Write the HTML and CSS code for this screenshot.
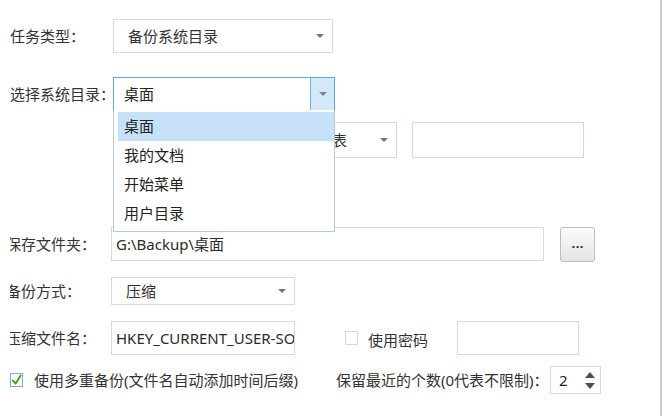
FILE: index.html
```html
<!DOCTYPE html>
<html lang="zh-CN">
<head>
    <meta charset="UTF-8">
    <title>备份任务</title>
    <link rel="stylesheet" href="styles.css">
</head>
<body>
    <div class="panel">
        <div class="row row-task">
            <span class="label">任务类型：</span>
            <div class="select w-220">
                <span class="select-text">备份系统目录</span>
                <span class="arrow"></span>
            </div>
        </div>

        <div class="row row-dir">
            <span class="label">选择系统目录：</span>
            <div class="select select-open w-221">
                <span class="select-text">桌面</span>
                <span class="select-btn"><span class="arrow"></span></span>
            </div>
        </div>

        <div class="row row-hidden">
            <div class="select select-reg w-187">
                <span class="select-text">注册表</span>
                <span class="arrow"></span>
            </div>
            <div class="input w-172"></div>
        </div>

        <div class="lower">
            <div class="row row-save">
                <span class="label cut">保存文件夹：</span>
                <div class="input w-433"><span class="input-text">G:\Backup\桌面</span></div>
                <button class="browse">...</button>
            </div>

            <div class="row row-mode">
                <span class="label cut">备份方式：</span>
                <div class="select w-184 h-28">
                    <span class="select-text">压缩</span>
                    <span class="arrow"></span>
                </div>
            </div>

            <div class="row row-zip">
                <span class="label cut">压缩文件名：</span>
                <div class="input w-184"><span class="input-text">HKEY_CURRENT_USER-SOFTWARE</span></div>
                <span class="check check-pwd"></span>
                <span class="check-label">使用密码</span>
                <div class="input w-122 pwd"></div>
            </div>

            <div class="row row-multi">
                <span class="check checked">
                    <svg viewBox="0 0 12 14" width="12" height="14">
                        <path d="M2 7.5 L5 11 L10.5 2" fill="none" stroke="#3f9a1c" stroke-width="2" stroke-linecap="round" stroke-linejoin="round"/>
                    </svg>
                </span>
                <span class="multi-label">使用多重备份(文件名自动添加时间后缀)</span>
                <span class="keep-label">保留最近的个数(0代表不限制)：</span>
                <div class="spinner">
                    <span class="spin-value">2</span>
                    <span class="spin-arrows">
                        <span class="spin-up"></span>
                        <span class="spin-down"></span>
                    </span>
                </div>
            </div>
        </div>

        <ul class="dropdown">
            <li class="active">桌面</li>
            <li>我的文档</li>
            <li>开始菜单</li>
            <li>用户目录</li>
        </ul>
    </div>
    <div class="edge"></div>
</body>
</html>
```

FILE: styles.css
```css
body {
    margin: 0;
    width: 662px;
    height: 416px;
    overflow: hidden;
    background-color: #fff;
    font-family: "Noto Sans", "Noto Sans CJK SC", sans-serif;
    font-size: 15px;
    color: #333;
    position: relative;
}

.panel {
    position: relative;
    padding: 19px 0 0 10px;
}

.row {
    display: flex;
    align-items: center;
    height: 34px;
}

.label {
    width: 103px;
    flex-shrink: 0;
    line-height: 20px;
    white-space: nowrap;
}

.row-dir {
    margin-top: 24px;
}

.row-hidden {
    margin-top: 11px;
    height: 36px;
    padding-left: 200px;
}

.lower {
    margin-top: 69px;
    overflow: hidden;
}

.lower .label {
    width: 101px;
}

.label.cut {
    margin-left: -4px;
    width: 105px !important;
}

.row-mode {
    margin-top: 16px;
    height: 28px;
}

.row-zip {
    margin-top: 16px;
}

.row-multi {
    margin-top: 11px;
    height: 28px;
}

/* select boxes */
.select {
    box-sizing: border-box;
    height: 34px;
    border: 1px solid #cfdbe5;
    background-color: #fff;
    display: flex;
    align-items: center;
    justify-content: space-between;
    padding-left: 14px;
    padding-right: 8px;
}

.select-text {
    line-height: 20px;
    white-space: nowrap;
}

.arrow {
    width: 0;
    height: 0;
    border-left: 4px solid transparent;
    border-right: 4px solid transparent;
    border-top: 4px solid #6e7780;
}

.select-open {
    border-color: #5aa9e2;
    padding-left: 10px;
    padding-right: 0;
    color: #222;
}

.select-btn {
    align-self: stretch;
    width: 23px;
    background-color: #d3e8f9;
    border-left: 1px solid #6fb3e6;
    display: flex;
    align-items: center;
    justify-content: center;
}

.select-btn .arrow {
    border-top-color: #7a8794;
}

.select-reg {
    padding-left: 91px;
    height: 36px;
}

.w-220 { width: 220px; }
.w-221 { width: 222px; }
.w-187 { width: 187px; }
.w-184 { width: 184px; }
.w-433 { width: 433px; }
.w-172 { width: 172px; margin-left: 15px; }
.w-122 { width: 122px; }
.h-28 { height: 28px; }

/* text inputs */
.input {
    box-sizing: border-box;
    height: 34px;
    border: 1px solid #cfdbe5;
    background-color: #fff;
    display: flex;
    align-items: center;
    padding-left: 4px;
    overflow: hidden;
    white-space: nowrap;
}

.row-hidden .input {
    height: 36px;
}

.input-text {
    line-height: 20px;
    color: #2b2b2b;
}

.browse {
    box-sizing: border-box;
    width: 35px;
    height: 35px;
    margin-left: 16px;
    border: 1px solid #b9bec4;
    border-radius: 3px;
    background: linear-gradient(#fbfbfb, #e3e4e6);
    font-family: "DejaVu Sans", sans-serif;
    font-size: 11px;
    font-weight: bold;
    color: #333;
    padding: 0;
    line-height: 1;
}

/* checkboxes */
.check {
    box-sizing: border-box;
    width: 13px;
    height: 14px;
    border: 1px solid #d4d8dc;
    background-color: #fff;
    flex-shrink: 0;
}

.check-pwd {
    margin-left: 50px;
}

.check-label {
    margin-left: 10px;
    line-height: 20px;
    white-space: nowrap;
    padding-top: 3px;
}

.pwd {
    margin-left: 29px;
}

.check.checked {
    border-color: #79acd6;
    display: flex;
    align-items: center;
    justify-content: center;
    margin-left: 0;
}

.check.checked svg {
    display: block;
}

.multi-label {
    margin-left: 11px;
    width: 302px;
    flex-shrink: 0;
    line-height: 20px;
    white-space: nowrap;
}

.keep-label {
    line-height: 20px;
    white-space: nowrap;
    width: 214px;
    flex-shrink: 0;
}

/* spinner */
.spinner {
    box-sizing: border-box;
    width: 51px;
    height: 28px;
    border: 1px solid #cfdbe5;
    display: flex;
    align-items: center;
    justify-content: space-between;
    padding: 0 5px 0 8px;
}

.spin-value {
    line-height: 20px;
    color: #222;
}

.spin-arrows {
    display: flex;
    flex-direction: column;
    gap: 5px;
}

.spin-up,
.spin-down {
    width: 0;
    height: 0;
    border-left: 5px solid transparent;
    border-right: 5px solid transparent;
}

.spin-up {
    border-bottom: 6px solid #4a4f55;
}

.spin-down {
    border-top: 6px solid #4a4f55;
}

/* open list of the system directory select */
.dropdown {
    position: absolute;
    left: 113px;
    top: 110px;
    width: 222px;
    height: 122px;
    box-sizing: border-box;
    margin: 0;
    padding: 2px 0 0 4px;
    list-style: none;
    background-color: #fff;
    border: 1px solid #b7c9d9;
    border-top: none;
    color: #222;
}

.dropdown li {
    height: 29px;
    line-height: 29px;
    padding-left: 6px;
}

.dropdown li.active {
    background-color: #c6e1f8;
}

.edge {
    position: absolute;
    top: 0;
    right: 0;
    width: 2px;
    height: 416px;
    background: repeating-linear-gradient(#c9ccd0 0, #c9ccd0 54px, #3a78b8 54px, #3a78b8 60px, #c9ccd0 60px, #c9ccd0 100px);
    background-size: 2px 45px;
    background-position: 0 12px;
}
```
